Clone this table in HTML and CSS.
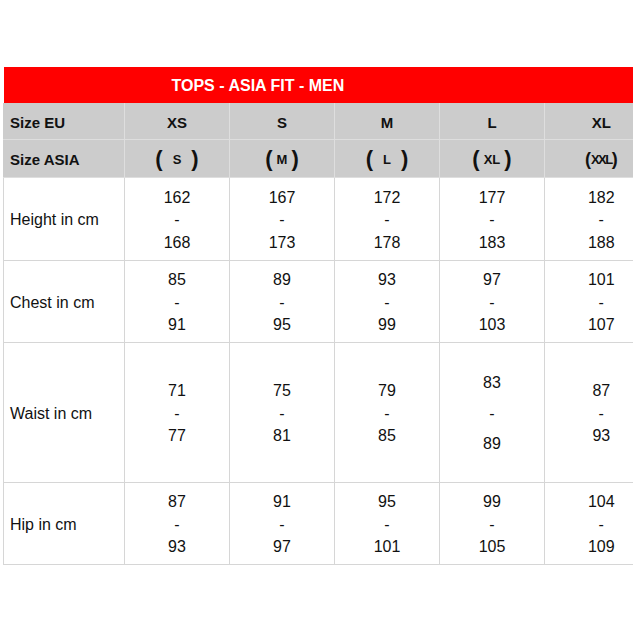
FILE: index.html
```html
<!DOCTYPE html>
<html>
<head>
<meta charset="utf-8">
<link rel="stylesheet" href="styles.css">
</head>
<body>
<div class="wrap">
<table class="chart">
  <colgroup>
    <col class="c0"><col class="c1"><col class="c1"><col class="c1"><col class="c1"><col class="c5">
  </colgroup>
  <tr class="title"><td colspan="6">TOPS - ASIA FIT - MEN</td></tr>
  <tr class="head h1">
    <td class="lbl">Size EU</td><td>XS</td><td>S</td><td>M</td><td>L</td><td class="last">XL</td>
  </tr>
  <tr class="head h2">
    <td class="lbl">Size ASIA</td>
    <td><span class="p">(</span><span class="sp1"></span><span class="a">S</span><span class="sp1"></span><span class="p">)</span></td>
    <td><span class="p">(</span><span class="sp2"></span><span class="a">M</span><span class="sp2"></span><span class="p">)</span></td>
    <td><span class="p">(</span><span class="sp1"></span><span class="a">L</span><span class="sp1"></span><span class="p">)</span></td>
    <td><span class="p">(</span><span class="sp2"></span><span class="a">XL</span><span class="sp2"></span><span class="p">)</span></td>
    <td class="last"><span class="p sm">(</span><span class="a tight">XXL</span><span class="p sm">)</span></td>
  </tr>
  <tr class="row r1">
    <td class="lbl">Height in cm</td>
    <td>162<br>-<br>168</td><td>167<br>-<br>173</td><td>172<br>-<br>178</td><td>177<br>-<br>183</td><td class="last">182<br>-<br>188</td>
  </tr>
  <tr class="row r2">
    <td class="lbl">Chest in cm</td>
    <td>85<br>-<br>91</td><td>89<br>-<br>95</td><td>93<br>-<br>99</td><td>97<br>-<br>103</td><td class="last">101<br>-<br>107</td>
  </tr>
  <tr class="row r3">
    <td class="lbl">Waist in cm</td>
    <td>71<br>-<br>77</td><td>75<br>-<br>81</td><td>79<br>-<br>85</td><td class="loose">83<br>-<br>89</td><td class="last">87<br>-<br>93</td>
  </tr>
  <tr class="row r4">
    <td class="lbl">Hip in cm</td>
    <td>87<br>-<br>93</td><td>91<br>-<br>97</td><td>95<br>-<br>101</td><td>99<br>-<br>105</td><td class="last">104<br>-<br>109</td>
  </tr>
</table>
</div>
</body>
</html>
```

FILE: styles.css
```css
html, body {
  margin: 0;
  padding: 0;
  background: #ffffff;
  overflow: hidden;
}
body {
  font-family: "Liberation Sans", Arial, sans-serif;
  color: #111111;
  width: 633px;
  height: 633px;
}
.wrap {
  padding: 67px 0 0 3px;
  width: 630px;
}
.chart {
  border-collapse: collapse;
  table-layout: fixed;
  width: 630px;
}
.c0 { width: 121px; }
.c1 { width: 105px; }
.c5 { width: 89px; }

.chart td {
  padding: 0;
  text-align: center;
  vertical-align: middle;
  border: 1px solid #d6d6d6;
}
.chart td.last {
  padding-left: 24px;
  border-right: none;
}
.title td {
  background: #ff0000;
  border: none;
  color: #ffffff;
  font-weight: bold;
  font-size: 16px;
  text-align: left;
  padding-left: 168px;
  padding-top: 2px;
  height: 34px;
}
.head td {
  background: #cccccc;
  border-color: #dedede;
  font-weight: bold;
  font-size: 15px;
  padding-top: 2px;
}
.head td:first-child { border-left-color: #cccccc; }
.h1 td { height: 34px; border-top: none; }
.h2 td { height: 35px; }
.chart td.lbl {
  text-align: left;
  padding-left: 6px;
}
.row td {
  font-size: 16px;
  line-height: 22.5px;
  padding-top: 3px;
}
.row td.lbl { line-height: 20px; padding-top: 2px; }
.r1 td { height: 79px; }
.r2 td { height: 78px; }
.r3 td { height: 136px; }
.r4 td { height: 78px; }
.loose { line-height: 30.5px !important; }

.p {
  font-size: 22px;
  font-weight: bold;
  vertical-align: middle;
  line-height: 20px;
}
.p.sm { font-size: 18px; }
.a {
  font-size: 13px;
  font-weight: bold;
  vertical-align: middle;
}
.tight { letter-spacing: -1.5px; }
.sp1 { display: inline-block; width: 10px; }
.sp2 { display: inline-block; width: 4px; }
```
